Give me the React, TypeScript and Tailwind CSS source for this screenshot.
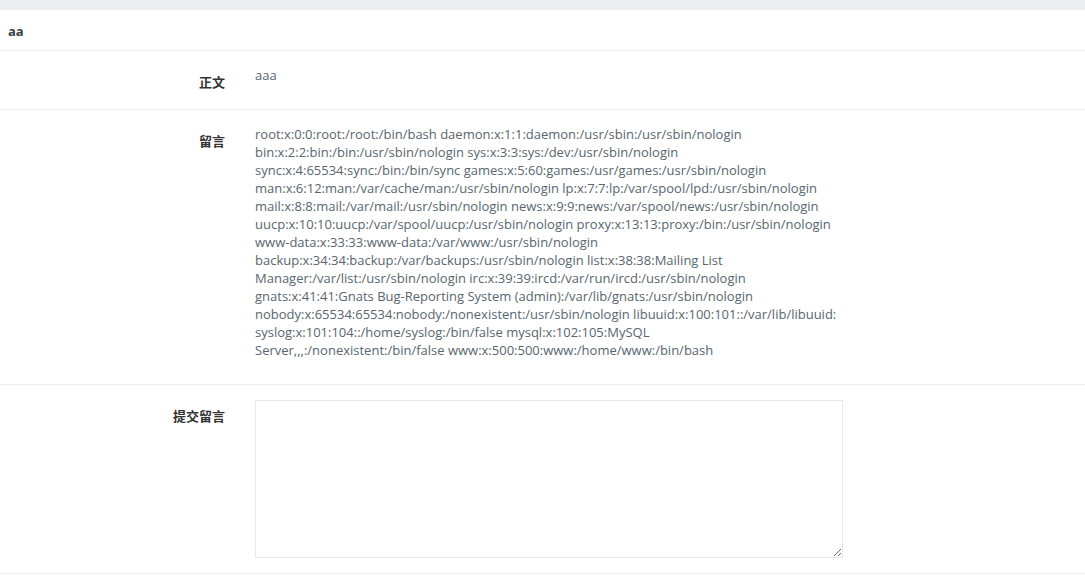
const passwd =
  'root:x:0:0:root:/root:/bin/bash daemon:x:1:1:daemon:/usr/sbin:/usr/sbin/nologin bin:x:2:2:bin:/bin:/usr/sbin/nologin sys:x:3:3:sys:/dev:/usr/sbin/nologin sync:x:4:65534:sync:/bin:/bin/sync games:x:5:60:games:/usr/games:/usr/sbin/nologin man:x:6:12:man:/var/cache/man:/usr/sbin/nologin lp:x:7:7:lp:/var/spool/lpd:/usr/sbin/nologin mail:x:8:8:mail:/var/mail:/usr/sbin/nologin news:x:9:9:news:/var/spool/news:/usr/sbin/nologin uucp:x:10:10:uucp:/var/spool/uucp:/usr/sbin/nologin proxy:x:13:13:proxy:/bin:/usr/sbin/nologin www-data:x:33:33:www-data:/var/www:/usr/sbin/nologin backup:x:34:34:backup:/var/backups:/usr/sbin/nologin list:x:38:38:Mailing List Manager:/var/list:/usr/sbin/nologin irc:x:39:39:ircd:/var/run/ircd:/usr/sbin/nologin gnats:x:41:41:Gnats Bug-Reporting System (admin):/var/lib/gnats:/usr/sbin/nologin nobody:x:65534:65534:nobody:/nonexistent:/usr/sbin/nologin libuuid:x:100:101::/var/lib/libuuid: syslog:x:101:104::/home/syslog:/bin/false mysql:x:102:105:MySQL Server,,,:/nonexistent:/bin/false www:x:500:500:www:/home/www:/bin/bash'

function Row({ label, children }: { label: string; children: React.ReactNode }) {
  return (
    <div className="flex border-b border-[#edf1f2] pt-[15px] pb-[15px]">
      <label className="w-[240px] shrink-0 pr-[15px] pt-[7px] text-right font-bold text-[#333] leading-[18px]">
        {label}
      </label>
      <div className="w-[588px] pl-[15px] box-content">{children}</div>
    </div>
  )
}

export default function App() {
  return (
    <div
      className="min-h-screen bg-[#eceff2] pt-[10px] text-[13px] leading-[18px] text-[#58666e]"
      style={{ fontFamily: '"Open Sans", "Noto Sans CJK SC", sans-serif' }}
    >
      <div className="bg-white">
        <div className="border-b border-[#edf1f2] px-[8px] pt-[12px] pb-[10px] font-bold text-[#363f44]">aa</div>

        <Row label="正文">
          <p className="mb-[10px]">aaa</p>
        </Row>

        <Row label="留言">
          <p className="mb-[10px] w-[585px] break-words">{passwd}</p>
        </Row>

        <Row label="提交留言">
          <textarea className="block h-[158px] w-[588px] border border-[#e6e9ec] bg-white outline-none" />
        </Row>
        <div className="h-[20px]" />
      </div>
    </div>
  )
}
